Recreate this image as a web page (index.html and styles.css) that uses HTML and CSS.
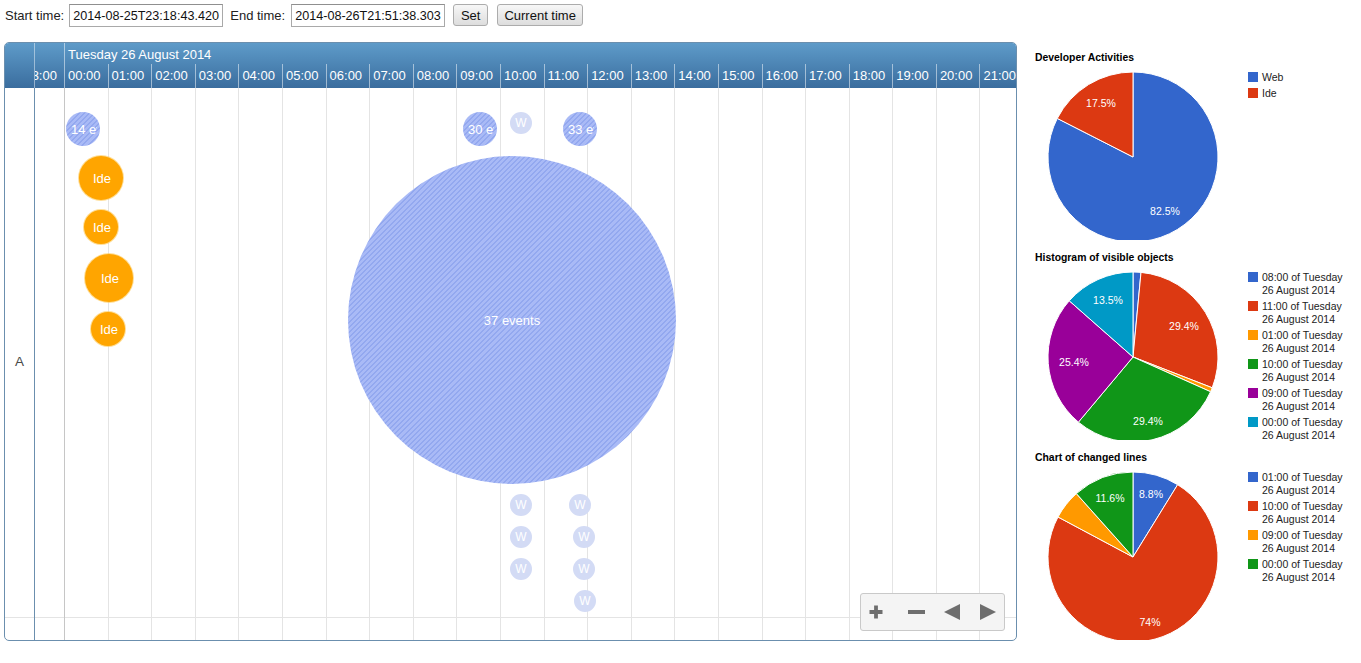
FILE: index.html
```html
<!DOCTYPE html>
<html>
<head>
<meta charset="utf-8">
<title>Timeline</title>
<link rel="stylesheet" href="styles.css">
</head>
<body>
<div class="toolbar">
  <label class="lbl">Start time:</label>
  <input class="time-input" value="2014-08-25T23:18:43.420">
  <label class="lbl lbl-end">End time:</label>
  <input class="time-input" value="2014-08-26T21:51:38.303">
  <button class="btn btn-set">Set</button>
  <button class="btn btn-now">Current time</button>
</div>

<div class="main">
  <div class="timeline">
    <div class="tl-header">
      <div class="tl-corner"></div>
      <div class="tl-axis">
        <div class="date-row">
          <div class="date-spacer"></div>
          <div class="date-label">Tuesday 26 August 2014</div>
        </div>
        <div class="hour-row">
          <div class="hour first">23:00</div>
          <div class="hour">00:00</div>
          <div class="hour">01:00</div>
          <div class="hour">02:00</div>
          <div class="hour">03:00</div>
          <div class="hour">04:00</div>
          <div class="hour">05:00</div>
          <div class="hour">06:00</div>
          <div class="hour">07:00</div>
          <div class="hour">08:00</div>
          <div class="hour">09:00</div>
          <div class="hour">10:00</div>
          <div class="hour">11:00</div>
          <div class="hour">12:00</div>
          <div class="hour">13:00</div>
          <div class="hour">14:00</div>
          <div class="hour">15:00</div>
          <div class="hour">16:00</div>
          <div class="hour">17:00</div>
          <div class="hour">18:00</div>
          <div class="hour">19:00</div>
          <div class="hour">20:00</div>
          <div class="hour">21:00</div>
          <div class="hour">22:00</div>
        </div>
      </div>
    </div>
    <div class="tl-body">
      <div class="tl-labels">
        <div class="group-label">A</div>
      </div>
      <div class="tl-canvas">
        <div class="grid">
          <div class="gcol first"><div class="gcell"></div></div>
          <div class="gcol major"><div class="gcell"></div></div>
          <div class="gcol"><div class="gcell"></div></div>
          <div class="gcol"><div class="gcell"></div></div>
          <div class="gcol"><div class="gcell"></div></div>
          <div class="gcol"><div class="gcell"></div></div>
          <div class="gcol"><div class="gcell"></div></div>
          <div class="gcol"><div class="gcell"></div></div>
          <div class="gcol"><div class="gcell"></div></div>
          <div class="gcol"><div class="gcell"></div></div>
          <div class="gcol"><div class="gcell"></div></div>
          <div class="gcol"><div class="gcell"></div></div>
          <div class="gcol"><div class="gcell"></div></div>
          <div class="gcol"><div class="gcell"></div></div>
          <div class="gcol"><div class="gcell"></div></div>
          <div class="gcol"><div class="gcell"></div></div>
          <div class="gcol"><div class="gcell"></div></div>
          <div class="gcol"><div class="gcell"></div></div>
          <div class="gcol"><div class="gcell"></div></div>
          <div class="gcol"><div class="gcell"></div></div>
          <div class="gcol"><div class="gcell"></div></div>
          <div class="gcol"><div class="gcell"></div></div>
          <div class="gcol"><div class="gcell"></div></div>
          <div class="gcol"><div class="gcell"></div></div>
        </div>

        <div class="bubble ev" style="left:31px;top:24px;width:34px;height:34px"><span>14 events</span></div>
        <div class="bubble ide" style="left:44px;top:68px;width:44px;height:44px"><span>Ide</span></div>
        <div class="bubble ide" style="left:49px;top:122px;width:34px;height:34px"><span>Ide</span></div>
        <div class="bubble ide" style="left:50px;top:166px;width:48px;height:48px"><span>Ide</span></div>
        <div class="bubble ide" style="left:56px;top:224px;width:34px;height:34px"><span>Ide</span></div>
        <div class="bubble ev" style="left:428px;top:24px;width:34px;height:34px"><span>30 events</span></div>
        <div class="bubble web" style="left:475px;top:24px;width:22px;height:22px"><span>W</span></div>
        <div class="bubble ev" style="left:528px;top:24px;width:34px;height:34px"><span>33 events</span></div>
        <div class="bubble ev big" style="left:313px;top:68px;width:328px;height:328px"><span>37 events</span></div>
        <div class="bubble web" style="left:475px;top:406px;width:22px;height:22px"><span>W</span></div>
        <div class="bubble web" style="left:475px;top:438px;width:22px;height:22px"><span>W</span></div>
        <div class="bubble web" style="left:475px;top:470px;width:22px;height:22px"><span>W</span></div>
        <div class="bubble web" style="left:534px;top:406px;width:22px;height:22px"><span>W</span></div>
        <div class="bubble web" style="left:538px;top:438px;width:22px;height:22px"><span>W</span></div>
        <div class="bubble web" style="left:538px;top:470px;width:22px;height:22px"><span>W</span></div>
        <div class="bubble web" style="left:539px;top:502px;width:22px;height:22px"><span>W</span></div>

        <div class="nav">
          <svg class="nav-icon" width="14" height="14" viewBox="0 0 14 14"><path d="M7 0.5 V13.5 M0.5 7 H13.5" stroke="#6e6e6e" stroke-width="3.8" fill="none"/></svg>
          <svg class="nav-icon nav-minus" width="17" height="14" viewBox="0 0 17 14"><path d="M0 7 H17" stroke="#6e6e6e" stroke-width="3.8" fill="none"/></svg>
          <svg class="nav-icon nav-left" width="16" height="16" viewBox="0 0 16 16"><path d="M0 8 L16 0 V16 Z" fill="#6e6e6e"/></svg>
          <svg class="nav-icon nav-right" width="16" height="16" viewBox="0 0 16 16"><path d="M16 8 L0 0 V16 Z" fill="#6e6e6e"/></svg>
        </div>
      </div>
    </div>
  </div>

  <div class="charts">
    <div class="chart">
      <div class="chart-title">Developer Activities</div>
      <div class="chart-body">
        <svg class="pie" width="172" height="176" viewBox="-86 -93 172 176">
          <path class="c-blue" d="M0 0 L0 -85 A85 85 0 1 1 -75.73 -38.59 Z"/>
          <path class="c-red" d="M0 0 L-75.73 -38.59 A85 85 0 0 1 0 -85 Z"/>
          <text x="-32" y="-54">17.5%</text>
          <text x="32" y="54">82.5%</text>
        </svg>
        <ul class="legend">
          <li class="legend-item"><span class="swatch c-blue-bg"></span><span class="legend-text">Web</span></li>
          <li class="legend-item"><span class="swatch c-red-bg"></span><span class="legend-text">Ide</span></li>
        </ul>
      </div>
    </div>

    <div class="chart">
      <div class="chart-title">Histogram of visible objects</div>
      <div class="chart-body">
        <svg class="pie" width="172" height="176" viewBox="-86 -93 172 176">
          <path class="c-blue" d="M0 0 L0 -85 A85 85 0 0 1 8 -84.62 Z"/>
          <path class="c-red" d="M0 0 L8 -84.62 A85 85 0 0 1 79.23 30.79 Z"/>
          <path class="c-orange" d="M0 0 L79.23 30.79 A85 85 0 0 1 77.58 34.73 Z"/>
          <path class="c-green" d="M0 0 L77.58 34.73 A85 85 0 0 1 -54.6 65.15 Z"/>
          <path class="c-purple" d="M0 0 L-54.6 65.15 A85 85 0 0 1 -63.76 -56.21 Z"/>
          <path class="c-teal" d="M0 0 L-63.76 -56.21 A85 85 0 0 1 0 -85 Z"/>
          <text x="-25" y="-57">13.5%</text>
          <text x="51" y="-31">29.4%</text>
          <text x="-59" y="5">25.4%</text>
          <text x="15" y="64">29.4%</text>
        </svg>
        <ul class="legend">
          <li class="legend-item"><span class="swatch c-blue-bg"></span><span class="legend-text">08:00 of Tuesday 26 August 2014</span></li>
          <li class="legend-item"><span class="swatch c-red-bg"></span><span class="legend-text">11:00 of Tuesday 26 August 2014</span></li>
          <li class="legend-item"><span class="swatch c-orange-bg"></span><span class="legend-text">01:00 of Tuesday 26 August 2014</span></li>
          <li class="legend-item"><span class="swatch c-green-bg"></span><span class="legend-text">10:00 of Tuesday 26 August 2014</span></li>
          <li class="legend-item"><span class="swatch c-purple-bg"></span><span class="legend-text">09:00 of Tuesday 26 August 2014</span></li>
          <li class="legend-item"><span class="swatch c-teal-bg"></span><span class="legend-text">00:00 of Tuesday 26 August 2014</span></li>
        </ul>
      </div>
    </div>

    <div class="chart">
      <div class="chart-title">Chart of changed lines</div>
      <div class="chart-body">
        <svg class="pie" width="172" height="176" viewBox="-86 -93 172 176">
          <path class="c-blue" d="M0 0 L0 -85 A85 85 0 0 1 44.64 -72.33 Z"/>
          <path class="c-red" d="M0 0 L44.64 -72.33 A85 85 0 1 1 -75 -40.01 Z"/>
          <path class="c-orange" d="M0 0 L-75 -40.01 A85 85 0 0 1 -56.61 -63.41 Z"/>
          <path class="c-green" d="M0 0 L-56.61 -63.41 A85 85 0 0 1 0 -85 Z"/>
          <text x="-23" y="-59">11.6%</text>
          <text x="18" y="-63">8.8%</text>
          <text x="17" y="65">74%</text>
        </svg>
        <ul class="legend">
          <li class="legend-item"><span class="swatch c-blue-bg"></span><span class="legend-text">01:00 of Tuesday 26 August 2014</span></li>
          <li class="legend-item"><span class="swatch c-red-bg"></span><span class="legend-text">10:00 of Tuesday 26 August 2014</span></li>
          <li class="legend-item"><span class="swatch c-orange-bg"></span><span class="legend-text">09:00 of Tuesday 26 August 2014</span></li>
          <li class="legend-item"><span class="swatch c-green-bg"></span><span class="legend-text">00:00 of Tuesday 26 August 2014</span></li>
        </ul>
      </div>
    </div>
  </div>
</div>
</body>
</html>
```

FILE: styles.css
```css
* { box-sizing: border-box; }

html, body {
  margin: 0;
  padding: 0;
  background: #ffffff;
  font-family: "Liberation Sans", Arial, sans-serif;
  color: #222;
  overflow: hidden;
}

/* ---------- toolbar ---------- */
.toolbar {
  display: flex;
  align-items: center;
  height: 31px;
  padding-left: 5px;
  font-size: 13px;
}
.lbl { color: #222; margin-right: 5px; }
.lbl-end { margin-left: 7px; margin-right: 6px; }
.time-input {
  width: 154px;
  height: 23px;
  border: 1px solid #a9a9a9;
  border-top-color: #8f8f8f;
  padding: 0 2px 0 3px;
  font-family: "Liberation Sans", Arial, sans-serif;
  font-size: 12.6px;
  color: #111;
  background: #fff;
  margin: 0;
  outline: none;
}
.btn {
  height: 22px;
  margin: 0;
  padding: 0;
  border: 1px solid #acacac;
  border-radius: 3px;
  background: linear-gradient(#f7f7f7, #dddddd);
  font-family: "Liberation Sans", Arial, sans-serif;
  font-size: 13px;
  color: #111;
  position: relative;
  top: -0.5px;
}
.btn-set { width: 35px; margin-left: 8px; }
.btn-now { width: 86px; margin-left: 9px; }

/* ---------- main ---------- */
.main {
  display: flex;
  margin-top: 9px;
}

.timeline {
  width: 1013px;
  height: 599px;
  margin: 2px 0 0 4px;
  border: 1px solid #6b8fae;
  border-radius: 5px;
  overflow: hidden;
  display: flex;
  flex-direction: column;
  flex-shrink: 0;
}

.tl-header {
  display: flex;
  height: 45px;
  flex-shrink: 0;
  background: linear-gradient(#5e9bc9, #3a6d9e);
  color: #fff;
  font-size: 13px;
}
.tl-corner {
  width: 30px;
  border-right: 1px solid rgba(255, 255, 255, 0.45);
  flex-shrink: 0;
}
.tl-axis {
  flex: 1;
  overflow: hidden;
  display: flex;
  flex-direction: column;
}
.date-row {
  display: flex;
  height: 21px;
  line-height: 23px;
}
.date-spacer { width: 29px; flex-shrink: 0; }
.date-label {
  border-left: 1px solid rgba(255, 255, 255, 0.5);
  padding-left: 3px;
  white-space: nowrap;
}
.hour-row {
  display: flex;
  height: 24px;
  line-height: 23px;
}
.hour {
  width: 43.6px;
  flex-shrink: 0;
  border-left: 1px solid rgba(255, 255, 255, 0.5);
  padding-left: 3px;
  white-space: nowrap;
  overflow: hidden;
}
.hour.first { margin-left: -14.6px; }

/* ---------- body ---------- */
.tl-body {
  display: flex;
  flex: 1;
  min-height: 0;
}
.tl-labels {
  width: 30px;
  flex-shrink: 0;
  border-right: 1px solid #6b8fae;
}
.group-label {
  height: 530px;
  border-bottom: 1px solid #e4e4e4;
  padding-top: 266px;
  line-height: 16px;
  text-align: center;
  font-size: 13.5px;
  color: #4a4a4a;
}
.tl-canvas {
  flex: 1;
  position: relative;
  overflow: hidden;
}
.grid {
  display: flex;
  height: 100%;
}
.gcol {
  width: 43.6px;
  flex-shrink: 0;
  height: 100%;
  border-left: 1px solid #e4e4e4;
}
.gcol.first { margin-left: -14.6px; }
.gcol.major { border-left-color: #c6c6c6; }
.gcell {
  height: 530px;
  border-bottom: 1px solid #e4e4e4;
}

/* bubbles */
.bubble {
  position: absolute;
  border-radius: 50%;
  display: flex;
  align-items: center;
  overflow: hidden;
  padding: 0 3px 0 5px;
  color: #fff;
  font-size: 13px;
}
.bubble span {
  flex: 1;
  min-width: 0;
  overflow: hidden;
  text-align: center;
  white-space: nowrap;
}
.ev {
  background: repeating-linear-gradient(135deg, #a9baf6 0px, #a9baf6 2.2px, #93a8ef 2.2px, #93a8ef 3.6px);
}
.ev.big { padding: 0 4px; }
.ide {
  background: #ffa500;
  box-shadow: 0 0 0 1px rgba(255, 200, 80, 0.6);
}
.web {
  background: #d3dbf5;
  font-size: 12px;
  padding: 0;
}

/* nav control */
.nav {
  position: absolute;
  left: 825px;
  top: 505px;
  width: 145px;
  height: 38px;
  border: 1px solid #c9c9c9;
  border-radius: 3px;
  background: #f4f4f4;
  display: flex;
  align-items: center;
  padding-left: 8px;
}
.nav-icon { display: block; flex-shrink: 0; }
.nav-minus { margin-left: 25px; }
.nav-left { margin-left: 19px; }
.nav-right { margin-left: 20px; }

/* ---------- charts ---------- */
.charts {
  width: 336px;
  margin-left: 8px;
  flex-shrink: 0;
}
.chart {
  height: 200px;
}
.chart-title {
  padding: 12px 0 0 10px;
  height: 24px;
  line-height: 12px;
  font-size: 10.4px;
  font-weight: bold;
  color: #000;
}
.chart-body {
  display: flex;
  align-items: flex-start;
}
.pie {
  display: block;
  margin-left: 22px;
  flex-shrink: 0;
}
.pie path {
  stroke: #fff;
  stroke-width: 1;
  stroke-linejoin: round;
}
.pie text {
  fill: #fff;
  font-family: "Liberation Sans", Arial, sans-serif;
  font-size: 10.5px;
  text-anchor: middle;
  dominant-baseline: central;
}
.c-blue { fill: #3366cc; }
.c-red { fill: #dc3912; }
.c-orange { fill: #ff9900; }
.c-green { fill: #109618; }
.c-purple { fill: #990099; }
.c-teal { fill: #0099c6; }

.legend {
  list-style: none;
  margin: 0 0 0 29px;
  padding: 7px 0 0 0;
  display: flex;
  flex-direction: column;
  gap: 3px;
}
.legend-item {
  display: flex;
  align-items: flex-start;
}
.swatch {
  width: 10px;
  height: 10px;
  margin-top: 1px;
  margin-right: 4px;
  flex-shrink: 0;
}
.legend-text {
  width: 88px;
  font-size: 10.5px;
  line-height: 13px;
  color: #222;
}
.c-blue-bg { background: #3366cc; }
.c-red-bg { background: #dc3912; }
.c-orange-bg { background: #ff9900; }
.c-green-bg { background: #109618; }
.c-purple-bg { background: #990099; }
.c-teal-bg { background: #0099c6; }
```
